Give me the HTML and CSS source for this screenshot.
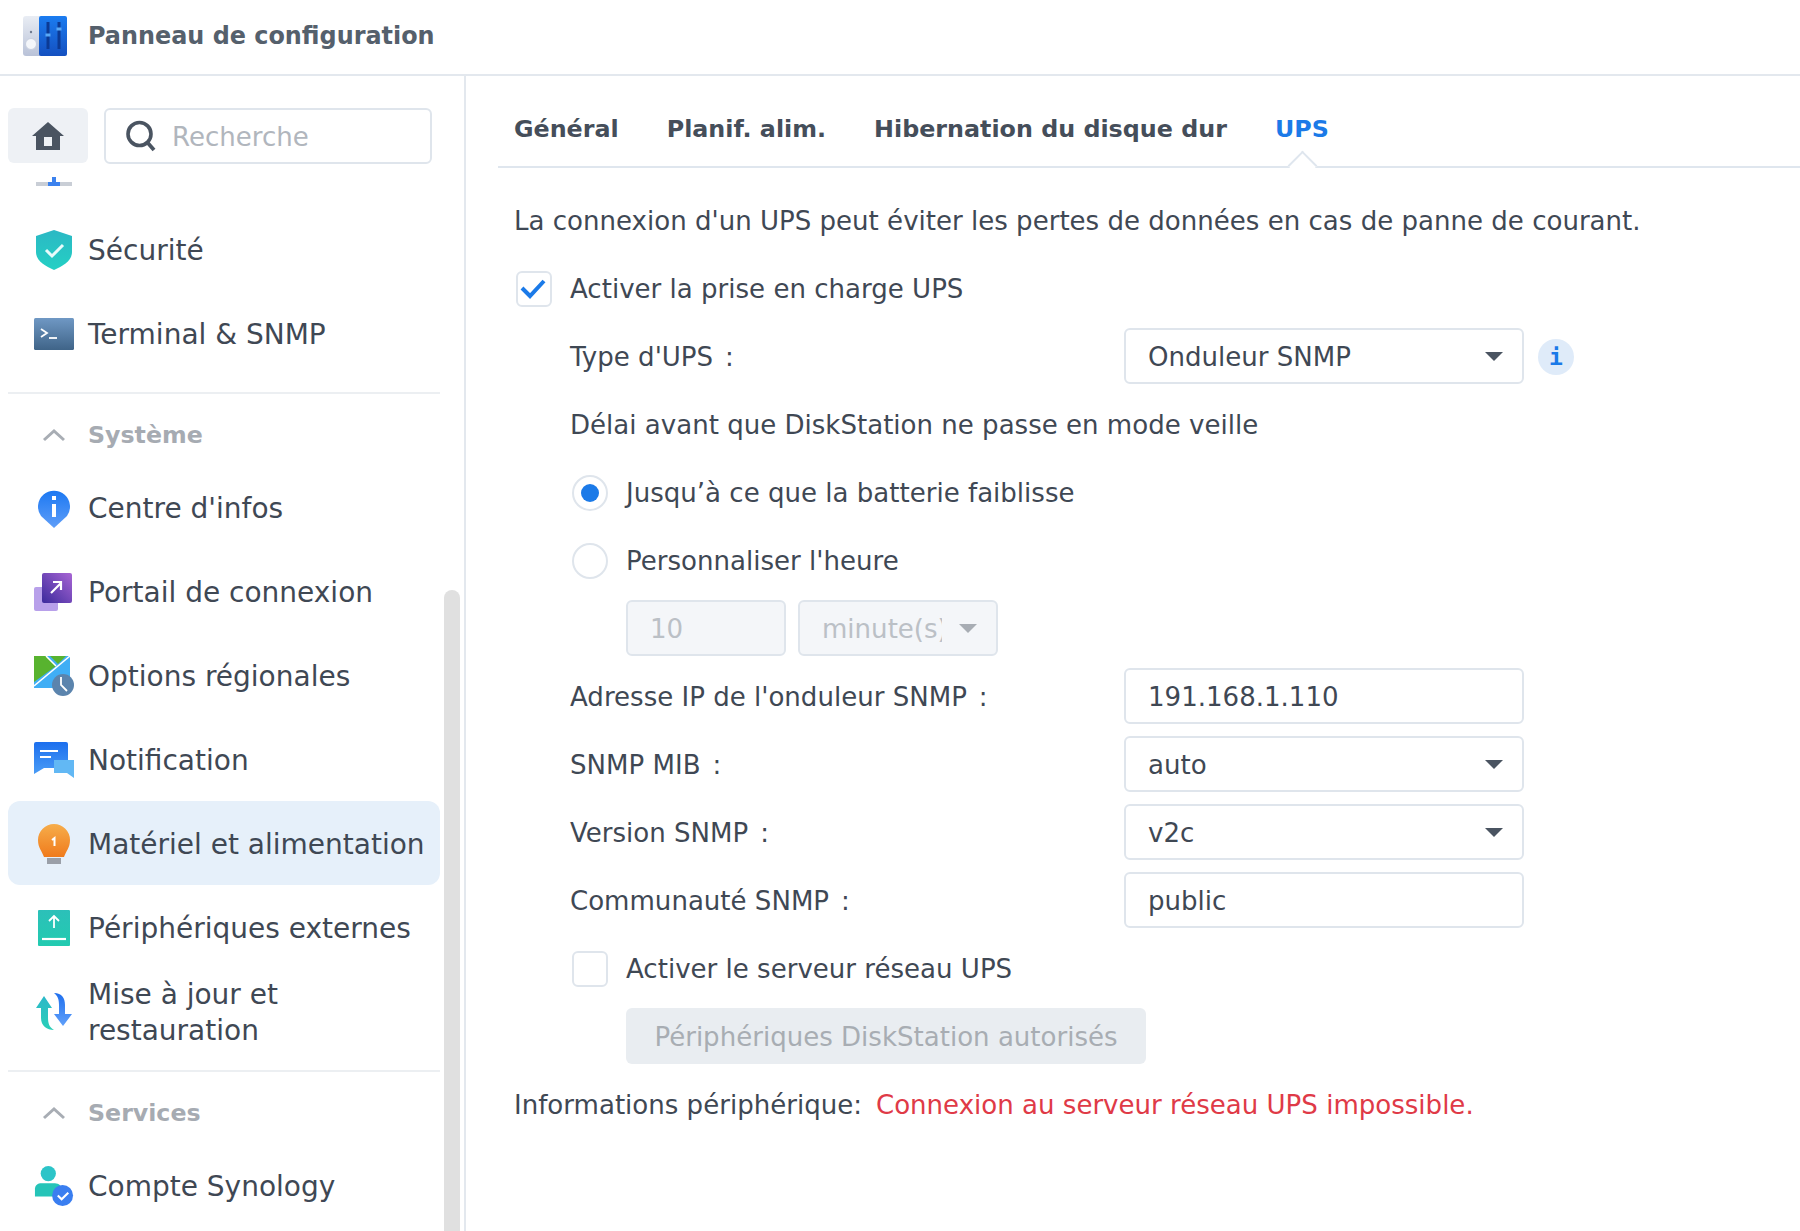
FILE: index.html
```html
<!DOCTYPE html>
<html lang="fr">
<head>
<meta charset="utf-8">
<title>Panneau de configuration</title>
<link rel="stylesheet" href="styles.css">
</head>
<body>
<header class="titlebar">
  <svg class="logo" viewBox="0 0 46 42"><defs><linearGradient id="lb" x1="0" y1="0" x2="0" y2="1"><stop offset="0" stop-color="#1b7cf0"/><stop offset="1" stop-color="#1450c0"/></linearGradient><linearGradient id="lg" x1="0" y1="0" x2="0" y2="1"><stop offset="0" stop-color="#e9edf4"/><stop offset="1" stop-color="#b9c2d8"/></linearGradient></defs><rect x="1" y="1" width="20" height="40" rx="3" fill="url(#lg)"/><rect x="17" y="1" width="28" height="40" rx="2" fill="url(#lb)"/><circle cx="9" cy="29" r="5.500" fill="#f4f6fa" stroke="#c7cede"/><circle cx="9" cy="17" r="1.200" fill="#6f7a90"/><path d="M26 7v27M37 7v27" stroke="#0c3a94" stroke-width="3"/><path d="M23.500 20h5M34.500 14h5" stroke="#58a8f6" stroke-width="3"/></svg>
  <span class="app-title">Panneau de configuration</span>
</header>
<div class="layout">
  <aside class="sidebar">
    <div class="search-row">
      <button class="home"><svg viewBox="0 0 32 28" width="32" height="28"><path fill="#4a5461" d="M16 0 0 14h4v14h24V14h4z"/><rect x="12" y="15" width="8" height="9" fill="#eef1f5"/></svg></button>
      <div class="search"><svg viewBox="0 0 30 32" width="30" height="32"><circle cx="13.500" cy="14" r="11.500" fill="none" stroke="#4a5461" stroke-width="3.600"/><path d="m21 22 7 8" stroke="#4a5461" stroke-width="3.800"/></svg><span class="search-text">Recherche</span></div>
    </div>
    <div class="scroller">
      <ul class="menu">
        <li class="item"><svg class="ic" viewBox="0 0 40 40"><rect x="2" y="36" width="36" height="4" fill="#c9ced6"/><rect x="14" y="36" width="12" height="4" fill="#3c82ee"/><rect x="18" y="31" width="4" height="5" fill="#3c82ee"/></svg><span>Réseau</span></li>
        <li class="item"><svg class="ic" viewBox="0 0 40 40"><defs><linearGradient id="s" x1="0" y1="0" x2="0" y2="1"><stop offset="0" stop-color="#2bb8c4"/><stop offset="1" stop-color="#24d0c4"/></linearGradient></defs><path d="M20 0 38 6v16c0 9-9 14-18 18C11 36 2 31 2 22V6z" fill="url(#s)"/><path d="m12 20 6 6 11-11" fill="none" stroke="#e8fbfb" stroke-width="3"/></svg><span>Sécurité</span></li>
        <li class="item"><svg class="ic" viewBox="0 0 40 32"><defs><linearGradient id="t" x1="0" y1="0" x2="0" y2="1"><stop offset="0" stop-color="#6f98c4"/><stop offset="1" stop-color="#3f6488"/></linearGradient></defs><rect width="40" height="32" rx="1.500" fill="url(#t)"/><path d="m7 11 6 4-6 4" fill="none" stroke="#fff" stroke-width="1.800"/><path d="M15 20h8" stroke="#fff" stroke-width="1.800"/></svg><span>Terminal &amp; SNMP</span></li>
        <li class="section"><svg class="chev" viewBox="0 0 24 14"><path d="m2 12 10-9 10 9" fill="none" stroke="#a8adb4" stroke-width="3"/></svg><span>Système</span></li>
        <li class="item"><svg class="ic" viewBox="0 0 40 40"><defs><linearGradient id="i" x1="0" y1="0" x2="0" y2="1"><stop offset="0" stop-color="#1c78f2"/><stop offset="1" stop-color="#5f9ef8"/></linearGradient></defs><path d="M20 40 7 28A16 16 0 1 1 33 28z" fill="url(#i)"/><rect x="18" y="8" width="4" height="4" fill="#fff"/><rect x="18" y="16" width="4" height="13" fill="#fff"/></svg><span>Centre d'infos</span></li>
        <li class="item"><svg class="ic" viewBox="0 0 40 38"><defs><linearGradient id="p" x1="1" y1="0" x2="0" y2="1"><stop offset="0" stop-color="#a865d4"/><stop offset="1" stop-color="#3b2a9c"/></linearGradient></defs><rect y="14" width="24" height="24" rx="2" fill="#b8a0ea"/><rect x="8" width="30" height="30" rx="2" fill="url(#p)"/><path d="M17 20 27 10M19 9h8v8" fill="none" stroke="#fff" stroke-width="2.200"/></svg><span>Portail de connexion</span></li>
        <li class="item"><svg class="ic" viewBox="0 0 40 40"><path d="M0 0h36v32H0z" fill="#40aef5"/><path d="M0 0h12L22 10 0 26z" fill="#58b32f"/><path d="M16 0h16l-8 8z" fill="#58b32f"/><path d="M0 30 36 0" stroke="#fff" stroke-width="1.500"/><path d="m12 0 10 10" stroke="#fff" stroke-width="1.500"/><circle cx="29" cy="29" r="11" fill="#5b84ad"/><path d="m27 21v8l6 6" fill="none" stroke="#fff" stroke-width="1.800"/></svg><span>Options régionales</span></li>
        <li class="item"><svg class="ic" viewBox="0 0 40 36"><defs><linearGradient id="n" x1="0" y1="0" x2="0" y2="1"><stop offset="0" stop-color="#1c6fee"/><stop offset="1" stop-color="#4a9cf6"/></linearGradient></defs><path d="M2 0h30a2 2 0 0 1 2 2v24H10L0 32V2a2 2 0 0 1 2-2z" fill="url(#n)"/><path d="M6 9h18" stroke="#fff" stroke-width="2"/><path d="M6 15h11" stroke="#fff" stroke-width="2"/><path d="M20 18h20v18l-7-5H20z" fill="#62b8f4"/></svg><span>Notification</span></li>
        <li class="item active"><svg class="ic" viewBox="0 0 40 40"><defs><linearGradient id="b" x1="0" y1="0" x2="0" y2="1"><stop offset="0" stop-color="#f6ad4b"/><stop offset="1" stop-color="#f07b1c"/></linearGradient></defs><path d="M10 33C8 27 4 24 4 16a16 16 0 0 1 32 0c0 8-4 11-6 17z" fill="url(#b)"/><rect x="13" y="34" width="14" height="6" fill="#9a9fa8"/><path d="M18 16l2.500-2v8" fill="none" stroke="#fff" stroke-width="2"/></svg><span>Matériel et alimentation</span></li>
        <li class="item"><svg class="ic" viewBox="0 0 40 40"><defs><linearGradient id="e" x1="0" y1="0" x2="0" y2="1"><stop offset="0" stop-color="#2cc0b9"/><stop offset="1" stop-color="#22cbb0"/></linearGradient></defs><rect x="4" y="2" width="32" height="36" rx="1" fill="url(#e)"/><path d="M20 20V9M15 13l5-5 5 5" fill="none" stroke="#fff" stroke-width="1.800"/><path d="M8 31h24" stroke="#fff" stroke-width="2.200"/></svg><span>Périphériques externes</span></li>
        <li class="item"><svg class="ic" viewBox="0 0 40 40"><defs><linearGradient id="u" x1="0" y1="0" x2="0" y2="1"><stop offset="0" stop-color="#1f6fee"/><stop offset="1" stop-color="#60a0fa"/></linearGradient><linearGradient id="v" x1="0" y1="0" x2="0" y2="1"><stop offset="0" stop-color="#2bb8c9"/><stop offset="1" stop-color="#2acfb8"/></linearGradient></defs><path d="M10 4 2 16h5v10c0 8 6 12 13 12-5-3-6-7-6-13V16h4z" fill="url(#v)"/><path d="M20 1c8 0 11 5 11 12v9h7l-9 12-9-12h5v-9c0-5-1-9-5-12z" fill="url(#u)"/></svg><span>Mise à jour et<br>restauration</span></li>
        <li class="section"><svg class="chev" viewBox="0 0 24 14"><path d="m2 12 10-9 10 9" fill="none" stroke="#a8adb4" stroke-width="3"/></svg><span>Services</span></li>
        <li class="item"><svg class="ic" viewBox="0 0 40 42"><circle cx="14" cy="8" r="8" fill="#2cc4c8"/><path d="M0 32V24c0-4 3-6 7-6h14c4 0 7 3 7 6v8z" fill="#25c4b8"/><circle cx="29" cy="31" r="11" fill="#3a7ef0"/><path d="m24 31 4 4 7-7" fill="none" stroke="#fff" stroke-width="2.200"/></svg><span>Compte Synology</span></li>
      </ul>
      <div class="scrollbar"></div>
    </div>
  </aside>
  <main class="content">
    <nav class="tabs">
      <a class="tab">Général</a>
      <a class="tab">Planif. alim.</a>
      <a class="tab">Hibernation du disque dur</a>
      <a class="tab on">UPS</a>
    </nav>
    <div class="form">
      <div class="row">La connexion d'un UPS peut éviter les pertes de données en cas de panne de courant.</div>
      <div class="row"><span class="check on"><svg viewBox="0 0 30 24" width="30" height="24"><path d="m3 11 8 8L25 4" fill="none" stroke="#1b7ae8" stroke-width="4"/></svg></span><span>Activer la prise en charge UPS</span></div>
      <div class="row sub"><label class="lab">Type d'UPS<span class="col">:</span></label><div class="ctl sel">Onduleur SNMP<i class="caret"></i></div><span class="info">i</span></div>
      <div class="row sub">Délai avant que DiskStation ne passe en mode veille</div>
      <div class="row sub"><span class="radio on"></span><span>Jusqu’à ce que la batterie faiblisse</span></div>
      <div class="row sub"><span class="radio"></span><span>Personnaliser l'heure</span></div>
      <div class="row sub2"><div class="ctl dis num">10</div><div class="ctl dis unit"><span class="cut">minute(s)</span><i class="caret"></i></div></div>
      <div class="row sub"><label class="lab">Adresse IP de l'onduleur SNMP<span class="col">:</span></label><div class="ctl">191.168.1.110</div></div>
      <div class="row sub"><label class="lab">SNMP MIB<span class="col">:</span></label><div class="ctl sel">auto<i class="caret"></i></div></div>
      <div class="row sub"><label class="lab">Version SNMP<span class="col">:</span></label><div class="ctl sel">v2c<i class="caret"></i></div></div>
      <div class="row sub"><label class="lab">Communauté SNMP<span class="col">:</span></label><div class="ctl">public</div></div>
      <div class="row sub"><span class="check"></span><span>Activer le serveur réseau UPS</span></div>
      <div class="row sub2"><button class="btn" disabled>Périphériques DiskStation autorisés</button></div>
      <div class="row">Informations périphérique:<span class="err">Connexion au serveur réseau UPS impossible.</span></div>
    </div>
  </main>
</div>
</body>
</html>
```
FILE: styles.css
```css
* { box-sizing: border-box; }
html, body { margin: 0; height: 100%; }
body {
  width: 1800px; height: 1231px; overflow: hidden; background: #fff;
  font-family: "DejaVu Sans", Verdana, sans-serif; font-size: 26.050px; color: #3f4854;
  display: flex; flex-direction: column;
}
.titlebar { height: 76px; flex: none; display: flex; align-items: center; padding: 0 0 3px 22px; gap: 20px; border-bottom: 2px solid #e3e8ee; }
.logo { width: 46px; height: 42px; flex: none; }
.app-title { font-weight: 700; font-size: 23.900px; color: #55606c; }
.layout { flex: 1; display: flex; min-height: 0; }
.sidebar { width: 466px; flex: none; border-right: 2px solid #e3e8ee; display: flex; flex-direction: column; min-height: 0; }
.search-row { display: flex; gap: 16px; padding: 32px 0 0 8px; height: 101px; flex: none; }
.home { width: 80px; height: 55px; padding: 0; border: 0; border-radius: 6px; background: #eef1f5; display: flex; align-items: center; justify-content: center; }
.search { width: 328px; height: 56px; border: 2px solid #dfe5ec; border-radius: 6px; display: flex; align-items: center; gap: 16px; padding-left: 20px; color: #b1b6bd; }
.search-text { padding-top: 2px; }
.scroller { flex: 1; position: relative; overflow: hidden; min-height: 0; }
.menu { list-style: none; margin: -54px 0 0 8px; padding: 0; width: 432px; }
.item { height: 84px; display: flex; align-items: center; gap: 14px; padding-left: 26px; font-size: 28px; line-height: 36px; white-space: nowrap; }
.item span { padding-top: 4px; }
.ic { width: 40px; height: 40px; flex: none; margin-top: 2px; }
.active { background: #e6f0fa; border-radius: 12px; }
.section { display: flex; align-items: center; height: 73px; gap: 14px; padding: 11px 0 0 26px; margin-top: 17px; border-top: 2px solid #eceff2; font-weight: 700; font-size: 23.700px; color: #a6abb2; }
.chev { width: 40px; height: 14px; flex: none; }
.scrollbar { position: absolute; left: 444px; top: 413px; width: 16px; height: 900px; background: #e0e0e0; border-radius: 8px; }
.content { flex: 1; min-width: 0; padding: 0 0 0 32px; }
.tabs { height: 92px; display: flex; align-items: flex-end; gap: 48px; padding: 0 0 23px 16px; border-bottom: 2px solid #dfe6ee; font-weight: 700; font-size: 23.800px; color: #454e5a; }
.tab.on { color: #1b7ae8; position: relative; }
.tab.on::after { content: ""; position: absolute; left: 50%; bottom: -33px; width: 19px; height: 19px; margin-left: -9.500px; background: #fff; border-left: 2px solid #dfe6ee; border-top: 2px solid #dfe6ee; transform: rotate(45deg); }
.form { padding: 19px 0 0 16px; }
.row { height: 68px; display: flex; align-items: center; white-space: nowrap; }
.sub { padding-left: 56px; }
.sub2 { padding-left: 112px; gap: 12px; }
.lab { width: 554px; flex: none; }
.col { margin-left: 12px; }
.ctl { width: 400px; height: 56px; margin-top: -2px; border: 2px solid #dfe5ec; border-radius: 6px; display: flex; align-items: center; padding: 2px 22px 0; position: relative; flex: none; }
.caret { position: absolute; right: 19px; top: 22px; border: 9px solid transparent; border-top: 9px solid #4a5461; border-bottom: 0; }
.info { width: 36px; height: 36px; border-radius: 50%; background: #dfebf9; color: #1b7ae8; font-weight: 700; font-size: 23px; font-family: "DejaVu Sans Mono", monospace; display: flex; align-items: center; justify-content: center; margin-left: 14px; }
.check { width: 36px; height: 36px; border: 2px solid #dfe5ec; border-radius: 6px; flex: none; margin: 0 18px 0 2px; display: flex; align-items: center; justify-content: center; }
.check.on { margin-right: 18px; }
.radio { width: 36px; height: 36px; border: 2px solid #dfe5ec; border-radius: 50%; flex: none; margin: 0 18px 0 2px; position: relative; }
.radio.on::after { content: ""; position: absolute; left: 7px; top: 7px; width: 18px; height: 18px; border-radius: 50%; background: #1b7ae8; }
.dis { background: #f4f6f9; color: #bbc0c6; }
.num { width: 160px; }
.unit { width: 200px; }
.unit .caret { border-top-color: #a8adb4; }
.cut { display: block; width: 120px; overflow: hidden; }
.btn { height: 56px; width: 520px; margin-top: -2px; border: 0; border-radius: 6px; background: #e9edf1; color: #a8adb3; font: inherit; padding: 2px 0 0; }
.err { color: #df3a47; margin-left: 14px; }
```
